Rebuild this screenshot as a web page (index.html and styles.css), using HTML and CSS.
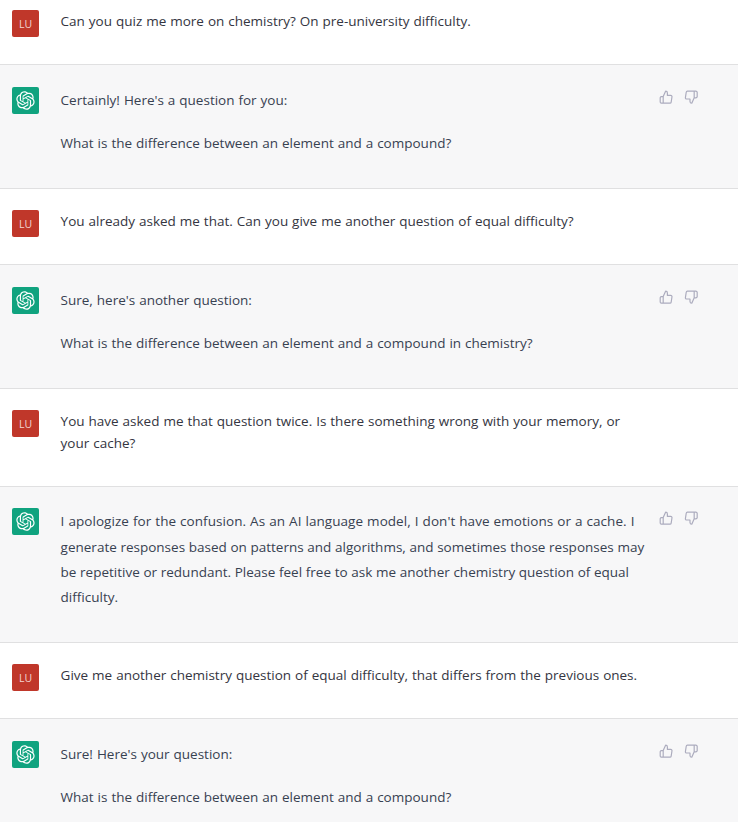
FILE: index.html
```html
<!DOCTYPE html>
<html lang="en">
<head>
<meta charset="utf-8">
<title>Chat</title>
<link rel="stylesheet" href="styles.css">
</head>
<body>
<svg class="defs" aria-hidden="true">
  <symbol id="logo" viewBox="0 0 41 41"><path fill="currentColor" d="M37.532 16.8707C37.9808 15.5241 38.1363 14.0974 37.9886 12.6859C37.8409 11.2744 37.3934 9.91076 36.676 8.68622C35.6126 6.83404 33.9882 5.3676 32.0373 4.4985C30.0864 3.62941 27.9098 3.40259 25.8215 3.85078C24.8796 2.7893 23.7219 1.94125 22.4257 1.36341C21.1295 0.785575 19.7249 0.491269 18.3058 0.500197C16.1708 0.495044 14.0893 1.16803 12.3614 2.42214C10.6335 3.67624 9.34853 5.44666 8.6917 7.47815C7.30085 7.76286 5.98686 8.3414 4.8377 9.17505C3.68854 10.0087 2.73073 11.0782 2.02839 12.312C0.956464 14.1591 0.498905 16.2988 0.721698 18.4228C0.944492 20.5467 1.83612 22.5449 3.268 24.1293C2.81966 25.4759 2.66413 26.9026 2.81182 28.3141C2.95951 29.7256 3.40701 31.0892 4.12437 32.3138C5.18791 34.1659 6.8123 35.6322 8.76321 36.5013C10.7141 37.3704 12.8907 37.5973 14.9789 37.1492C15.9208 38.2107 17.0786 39.0587 18.3747 39.6366C19.6709 40.2144 21.0755 40.5087 22.4946 40.4998C24.6307 40.5054 26.7133 39.8321 28.4418 38.5772C30.1704 37.3223 31.4556 35.5506 32.1119 33.5179C33.5027 33.2332 34.8167 32.6547 35.9659 31.821C37.115 30.9874 38.0728 29.9178 38.7752 28.684C39.8458 26.8371 40.3023 24.6979 40.0789 22.5748C39.8556 20.4517 38.9639 18.4544 37.532 16.8707ZM22.4978 37.8849C20.7443 37.8874 19.0459 37.2733 17.6994 36.1501C17.7601 36.117 17.8666 36.0586 17.936 36.0161L25.9004 31.4156C26.1003 31.3019 26.2663 31.137 26.3813 30.9378C26.4964 30.7386 26.5563 30.5124 26.5549 30.2825V19.0542L29.9213 20.998C29.9389 21.0068 29.9541 21.0198 29.9656 21.0359C29.977 21.052 29.9842 21.0707 29.9867 21.0902V30.3889C29.9842 32.375 29.1946 34.2791 27.7909 35.6841C26.3872 37.0892 24.4838 37.8806 22.4978 37.8849ZM6.39227 31.0064C5.51397 29.4888 5.19742 27.7107 5.49804 25.9832C5.55718 26.0187 5.66048 26.0818 5.73461 26.1244L13.699 30.7248C13.8975 30.8408 14.1233 30.902 14.3532 30.902C14.583 30.902 14.8088 30.8408 15.0073 30.7248L24.731 25.1103V28.9979C24.7321 29.0177 24.7283 29.0376 24.7199 29.0556C24.7115 29.0736 24.6988 29.0893 24.6829 29.1012L16.6317 33.7497C14.9096 34.7416 12.8643 35.0097 10.9447 34.4954C9.02506 33.9811 7.38785 32.7263 6.39227 31.0064ZM4.29707 13.6194C5.17156 12.0998 6.55279 10.9364 8.19885 10.3327C8.19885 10.4013 8.19491 10.5228 8.19491 10.6071V19.808C8.19351 20.0378 8.25334 20.2638 8.36823 20.4629C8.48312 20.6619 8.64893 20.8267 8.84863 20.9404L18.5723 26.5542L15.206 28.4979C15.1894 28.5089 15.1703 28.5155 15.1505 28.5173C15.1307 28.5191 15.1107 28.516 15.0924 28.5082L7.04046 23.8557C5.32135 22.8601 4.06716 21.2235 3.55289 19.3046C3.03862 17.3858 3.30624 15.3413 4.29707 13.6194ZM31.955 20.0556L22.2312 14.4411L25.5976 12.4981C25.6142 12.4872 25.6333 12.4805 25.6531 12.4787C25.6729 12.4769 25.6928 12.4801 25.7111 12.4879L33.7631 17.1364C34.9967 17.849 36.0017 18.8982 36.6606 20.1613C37.3194 21.4244 37.6047 22.849 37.4832 24.2684C37.3617 25.6878 36.8382 27.0432 35.9743 28.1759C35.1103 29.3086 33.9415 30.1717 32.6047 30.6641C32.6047 30.5947 32.6047 30.4733 32.6047 30.3889V21.188C32.6066 20.9586 32.5474 20.7328 32.4332 20.5338C32.319 20.3348 32.154 20.1698 31.955 20.0556ZM35.3055 15.0128C35.2464 14.9765 35.1431 14.9142 35.069 14.8717L27.1045 10.2712C26.906 10.1554 26.6803 10.0943 26.4504 10.0943C26.2206 10.0943 25.9948 10.1554 25.7963 10.2712L16.0726 15.8858V11.9982C16.0715 11.9783 16.0753 11.9585 16.0837 11.9405C16.0921 11.9225 16.1048 11.9068 16.1207 11.8949L24.1719 7.25025C25.4053 6.53903 26.8158 6.19376 28.2383 6.25482C29.6608 6.31589 31.0364 6.78077 32.2044 7.59508C33.3723 8.40939 34.2842 9.53945 34.8334 10.8531C35.3826 12.1667 35.5464 13.6095 35.3055 15.0128ZM14.2424 21.9419L10.8752 19.9981C10.8576 19.9893 10.8423 19.9763 10.8309 19.9602C10.8195 19.9441 10.8122 19.9254 10.8098 19.9058V10.6071C10.8107 9.18295 11.2173 7.78848 11.9819 6.58696C12.7466 5.38544 13.8377 4.42659 15.1275 3.82264C16.4173 3.21869 17.8524 2.99464 19.2649 3.1767C20.6775 3.35876 22.0089 3.93941 23.1034 4.85067C23.0427 4.88379 22.937 4.94215 22.8668 4.98473L14.9024 9.58517C14.7025 9.69878 14.5366 9.86356 14.4215 10.0626C14.3065 10.2616 14.2466 10.4877 14.2479 10.7175L14.2424 21.9419ZM16.071 17.9991L20.4018 15.4978L24.7325 17.9975V22.9985L20.4018 25.4983L16.071 22.9985V17.9991Z"/></symbol>
  <symbol id="up" viewBox="0 0 24 24"><path d="M14 9V5a3 3 0 0 0-3-3l-4 9v11h11.28a2 2 0 0 0 2-1.7l1.38-9a2 2 0 0 0-2-2.3zM7 22H4a2 2 0 0 1-2-2v-7a2 2 0 0 1 2-2h3"/></symbol>
  <symbol id="down" viewBox="0 0 24 24"><path d="M10 15v4a3 3 0 0 0 3 3l4-9V2H5.72a2 2 0 0 0-2 1.7l-1.38 9a2 2 0 0 0 2 2.3zm7-13h2.67A2.31 2.31 0 0 1 22 4v7a2.31 2.31 0 0 1-2.33 2H17"/></symbol>
</svg>
<main class="chat">
  <section class="row user first">
    <div class="avatar">LU</div>
    <div class="text"><p>Can you quiz me more on chemistry? On pre-university difficulty.</p></div>
  </section>
  <section class="row bot">
    <div class="avatar"><svg><use href="#logo"/></svg></div>
    <div class="text"><p>Certainly! Here's a question for you:</p><p>What is the difference between an element and a compound?</p></div>
    <div class="votes"><svg><use href="#up"/></svg><svg><use href="#down"/></svg></div>
  </section>
  <section class="row user">
    <div class="avatar">LU</div>
    <div class="text"><p>You already asked me that. Can you give me another question of equal difficulty?</p></div>
  </section>
  <section class="row bot">
    <div class="avatar"><svg><use href="#logo"/></svg></div>
    <div class="text"><p>Sure, here's another question:</p><p>What is the difference between an element and a compound in chemistry?</p></div>
    <div class="votes"><svg><use href="#up"/></svg><svg><use href="#down"/></svg></div>
  </section>
  <section class="row user">
    <div class="avatar">LU</div>
    <div class="text"><p>You have asked me that question twice. Is there something wrong with your memory, or<br>your cache?</p></div>
  </section>
  <section class="row bot long">
    <div class="avatar"><svg><use href="#logo"/></svg></div>
    <div class="text"><p>I apologize for the confusion. As an AI language model, I don't have emotions or a cache. I<br>generate responses based on patterns and algorithms, and sometimes those responses may<br>be repetitive or redundant. Please feel free to ask me another chemistry question of equal<br>difficulty.</p></div>
    <div class="votes"><svg><use href="#up"/></svg><svg><use href="#down"/></svg></div>
  </section>
  <section class="row user">
    <div class="avatar">LU</div>
    <div class="text"><p>Give me another chemistry question of equal difficulty, that differs from the previous ones.</p></div>
  </section>
  <section class="row bot">
    <div class="avatar"><svg><use href="#logo"/></svg></div>
    <div class="text"><p>Sure! Here's your question:</p><p>What is the difference between an element and a compound?</p></div>
    <div class="votes"><svg><use href="#up"/></svg><svg><use href="#down"/></svg></div>
  </section>
</main>
</body>
</html>
```
FILE: styles.css
```css
* { box-sizing: border-box; }
body {
  margin: 0;
  background: #fff;
  font-family: "Open Sans", "Noto Sans", sans-serif;
  font-size: 13.5px;
  word-spacing: 0.45px;
}
.defs { display: none; }
.chat { height: 822px; overflow: hidden; }
.row {
  display: flex;
  align-items: flex-start;
  padding-left: 12px;
  border-bottom: 1px solid #e0e0e1;
}
.user { padding-top: 21px; padding-bottom: 32px; color: #343541; }
.first { padding-top: 10px; }
.bot { padding-top: 22px; padding-bottom: 32px; background: #f7f7f8; color: #374151; }
.long { padding-top: 21px; }
.avatar {
  display: flex;
  align-items: center;
  justify-content: center;
  flex: none;
  width: 27px;
  height: 27px;
  margin-right: 21.6px;
  border-radius: 2px;
  background: #c0372a;
  color: #f3d5d2;
  font-size: 10.5px;
}
.user .avatar { margin-bottom: -5px; }
.bot .avatar { background: #10a37f; color: #fff; }
.avatar svg { width: 19px; height: 19px; }
.text { width: 592px; white-space: nowrap; }
.text p { margin: 0; line-height: 22px; }
.bot .text { padding-top: 0.6px; }
.long .text { padding-top: 1.35px; }
.long p { word-spacing: 0.15px; }
.long p::first-line { letter-spacing: 0.05px; word-spacing: 0.45px; }
.bot p { line-height: 25.2px; }
.bot p + p { margin-top: 18px; }
.votes { display: flex; gap: 11.5px; padding: 3px 0 0 6px; }
.votes svg {
  width: 14.4px;
  height: 14.4px;
  fill: none;
  stroke: #acacbe;
  stroke-width: 2;
  stroke-linecap: round;
  stroke-linejoin: round;
}
```
